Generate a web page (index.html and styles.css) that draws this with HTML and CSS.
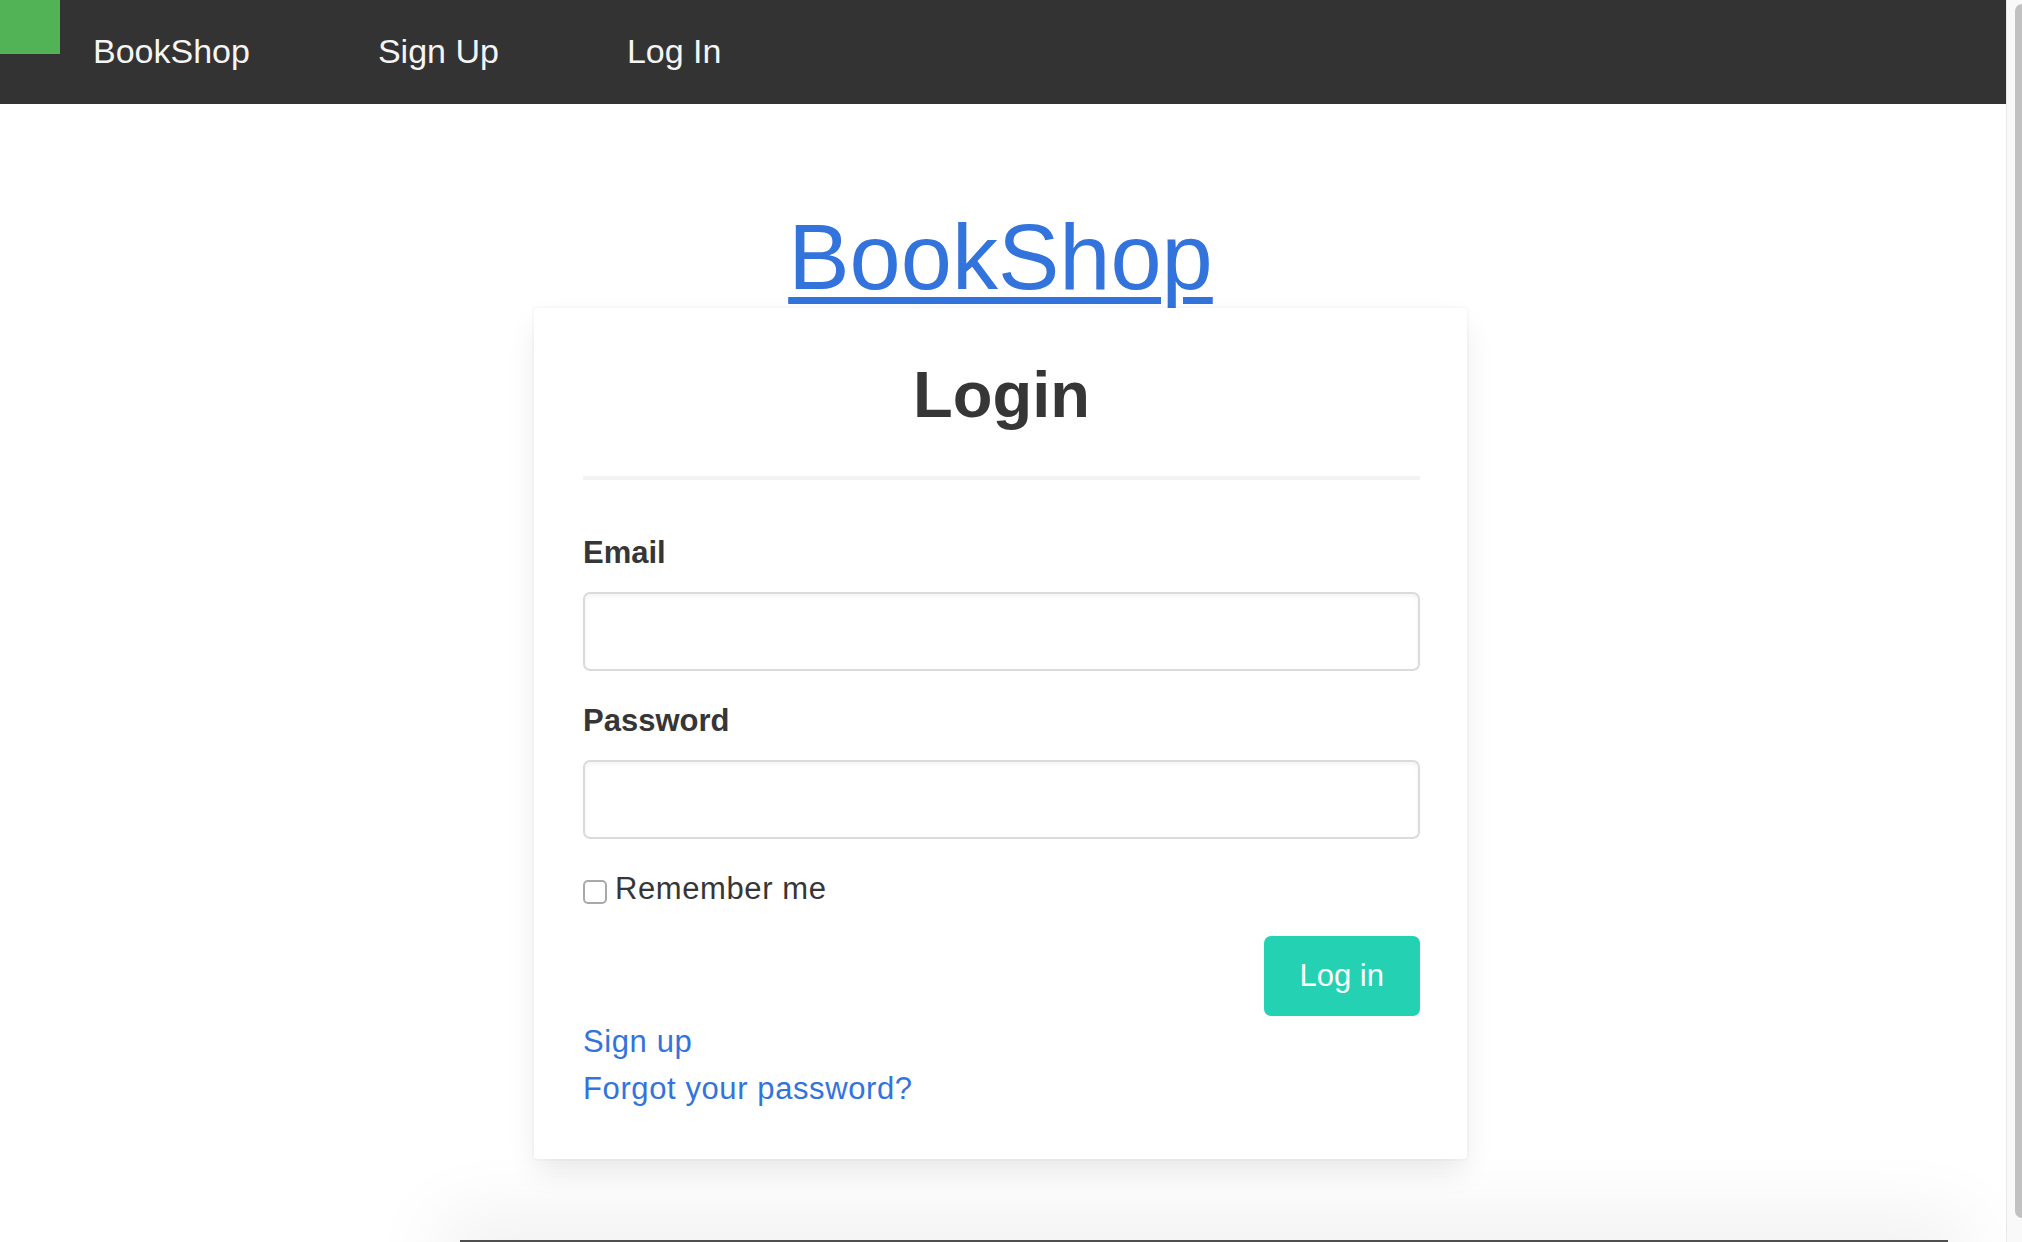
FILE: index.html
```html
<!DOCTYPE html>
<html lang="en">
<head>
<meta charset="utf-8">
<title>BookShop</title>
<link rel="stylesheet" href="styles.css">
</head>
<body>
<div class="page">
  <nav class="navbar">
    <div class="brand-block"></div>
    <div class="nav-links">
      <a class="nav-item" href="#">BookShop</a>
      <a class="nav-item" href="#">Sign Up</a>
      <a class="nav-item" href="#">Log In</a>
    </div>
  </nav>
  <main class="main">
    <h1 class="site-title"><a href="#">BookShop</a></h1>
    <div class="card">
      <h2 class="card-title">Login</h2>
      <hr class="divider">
      <form class="form">
        <label class="label" for="email">Email</label>
        <input class="input" id="email" type="email">
        <label class="label label-password" for="password">Password</label>
        <input class="input" id="password" type="password">
        <label class="remember"><input class="checkbox" type="checkbox"><span>Remember me</span></label>
        <div class="actions"><button class="button" type="button">Log in</button></div>
      </form>
      <div class="links">
        <a href="#">Sign up</a>
        <a href="#">Forgot your password?</a>
      </div>
    </div>
  </main>
  <footer class="footer"></footer>
</div>
<div class="scrollbar"><div class="scrollbar-thumb"></div></div>
</body>
</html>
```
FILE: styles.css
```css
html {
  background: #ffffff;
  overflow: hidden;
}
body {
  margin: 0;
  display: flex;
  align-items: flex-start;
  height: 1242px;
  overflow: hidden;
  font-family: "Liberation Sans", Arial, sans-serif;
  color: #363636;
}
a {
  color: #3273dc;
  text-decoration: none;
}
.page {
  flex: 1;
  min-width: 0;
}
.scrollbar {
  box-sizing: border-box;
  flex: 0 0 16px;
  height: 1242px;
  padding: 4px 0 24px 8px;
  background: #f9f9f9;
  border-left: 1px solid #e8e8e8;
  display: flex;
}
.scrollbar-thumb {
  flex: 1;
  background: #c1c1c1;
  border-radius: 8px 0 0 8px;
}
.navbar {
  display: flex;
  align-items: center;
  height: 104px;
  background: #333333;
}
.brand-block {
  align-self: flex-start;
  width: 60px;
  height: 54px;
  background: #52b256;
}
.nav-links {
  display: flex;
  gap: 128px;
  margin-left: 33px;
  padding-bottom: 2px;
}
.nav-item {
  color: #f5f5f5;
  font-size: 34px;
  line-height: 40px;
}
.main {
  padding-right: 5px;
  display: flex;
  flex-direction: column;
  align-items: center;
}
.site-title {
  margin: 102px 0 0;
  font-size: 92px;
  font-weight: 400;
  line-height: 102px;
}
.site-title a {
  text-decoration: underline;
  text-decoration-thickness: 7px;
  text-underline-offset: 8px;
}
.card {
  box-sizing: border-box;
  width: 933px;
  margin-top: 0;
  padding: 50px 47px 47px 49px;
  background: #ffffff;
  border-radius: 3px;
  box-shadow: 0 14px 30px -4px rgba(10, 10, 10, 0.1), 0 0 0 2px rgba(10, 10, 10, 0.02);
}
.card-title {
  margin: 0;
  text-align: center;
  font-size: 65px;
  font-weight: 700;
  line-height: 73px;
  color: #363636;
}
.divider {
  margin: 45px 0 50px;
  height: 4px;
  border: 0;
  background: #f3f3f3;
}
.form {
  display: flex;
  flex-direction: column;
}
.label {
  font-size: 31px;
  font-weight: 700;
  line-height: 46px;
  color: #363636;
}
.input {
  box-sizing: border-box;
  width: 100%;
  height: 79px;
  margin-top: 16px;
  border: 2px solid #dbdbdb;
  border-radius: 7px;
  box-shadow: inset 0 2px 4px rgba(10, 10, 10, 0.05);
  font-size: 31px;
  padding: 0 20px;
  outline: none;
}
.label-password {
  margin-top: 27px;
}
.remember {
  display: flex;
  align-items: center;
  gap: 8px;
  margin-top: 27px;
  font-size: 31px;
  line-height: 46px;
  letter-spacing: 0.6px;
  color: #363636;
}
.checkbox {
  appearance: none;
  -webkit-appearance: none;
  box-sizing: border-box;
  width: 24px;
  height: 24px;
  margin: 6px 0 0 0;
  border: 2px solid #a9a9a9;
  border-radius: 5px;
  background: #ffffff;
}
.actions {
  display: flex;
  justify-content: flex-end;
  margin-top: 24px;
}
.button {
  height: 80px;
  padding: 0 36px;
  border: 0;
  border-radius: 7px;
  background: #24d1b2;
  color: #ffffff;
  font-family: "Liberation Sans", Arial, sans-serif;
  font-size: 31px;
  line-height: 80px;
}
.links {
  display: flex;
  flex-direction: column;
  align-items: flex-start;
  margin-top: 2px;
  font-size: 31px;
  line-height: 47px;
  letter-spacing: 0.6px;
}
.footer {
  margin: 81px 0 0 460px;
  width: 1488px;
  height: 30px;
  background: #4f4f4f;
  box-shadow: 0 0 80px 20px rgba(0, 0, 0, 0.07);
}
```
